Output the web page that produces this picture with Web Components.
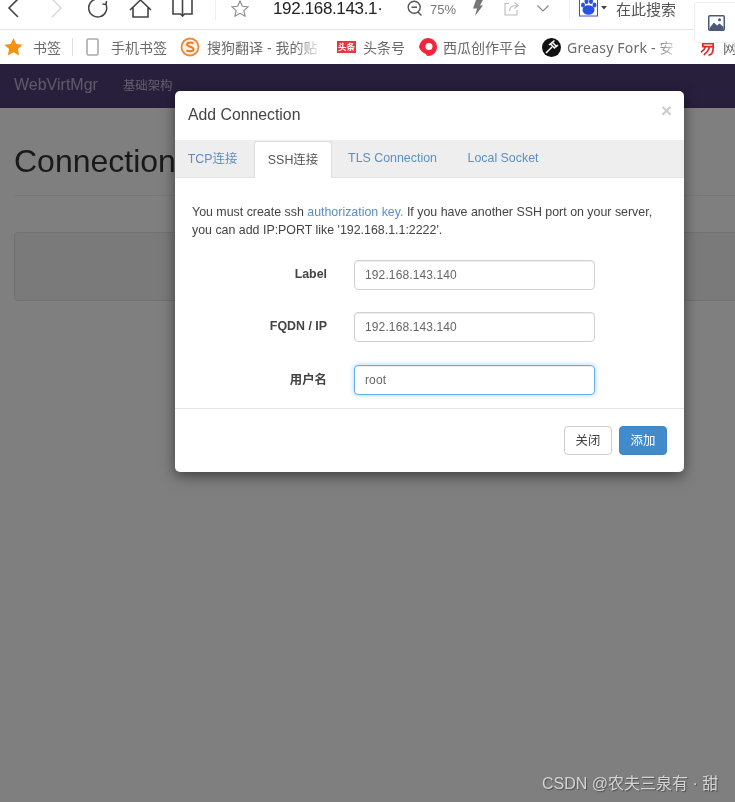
<!DOCTYPE html>
<html lang="zh">
<head>
<meta charset="utf-8">
<title>WebVirtMgr</title>
<style>
    html, body { margin: 0; height: 100%; overflow: hidden; background: #fff; }
    body {
        display: flex;
        flex-direction: column;
        width: 735px;
        height: 802px;
        font-family: "Liberation Sans", "Noto Sans CJK SC", sans-serif;
        position: relative;
        filter: blur(.35px);
    }
</style>
</head>
<body>
<browser-toolbar></browser-toolbar>
<bookmark-bar></bookmark-bar>
<web-page>
    <connection-modal></connection-modal>
</web-page>
<csdn-mark>CSDN @农夫三泉有 · 甜</csdn-mark>

<script>
const stroke = (d, w = 1.6, c = '#444') => `<path d="${d}" fill="none" stroke="${c}" stroke-width="${w}"/>`;

window.customElements.define('browser-toolbar', class BrowserToolbar extends HTMLElement {
    constructor() {
        super();
        this.attachShadow({ mode: 'open' });
        this.shadowRoot.innerHTML = `
            <style>
                :host {
                    display: flex;
                    align-items: center;
                    height: 29px;
                    border-bottom: 1px solid #e3e3e3;
                    background: #fff;
                    color: #222;
                    position: relative;
                    flex: none;
                }
                .cell { flex: none; display: flex; justify-content: center; align-items: center; height: 20px; margin-top: -13px; }
                svg { display: block; overflow: visible; }
                .sep { flex: none; width: 1px; height: 20px; margin-top: -9px; background: #eee; }
                .url { flex: none; font-size: 17px; width: 126px; margin: -11px 0 0 9px; white-space: nowrap; letter-spacing: -.35px; }
                .pct { flex: none; font-size: 13px; color: #777; margin: -11px 0 0 -1px; width: 38px; }
                .search { flex: none; font-size: 15px; color: #555; margin: -13px 0 0 4px; white-space: nowrap; }
                .thumb {
                    position: absolute; left: 694px; top: 2px; width: 44px; height: 41px;
                    background: #fff; border: 1px solid #eee; border-radius: 3px;
                    display: flex; align-items: center; justify-content: center;
                    box-sizing: border-box; z-index: 2;
                }
            </style>
            <span class="cell" style="width:28px"><svg width="12" height="20" viewBox="0 0 12 20">${stroke('M10 1 1 10l9 9')}</svg></span>
            <span style="flex:none;width:7px"></span>
            <span class="cell" style="width:42px"><svg width="12" height="20" viewBox="0 0 12 20">${stroke('M2 1l9 9-9 9', 1.4, '#d5d5d5')}</svg></span>
            <span class="cell" style="width:42px"><svg width="20" height="20" viewBox="0 0 20 20">${stroke('M18 6.500A9 9 0 1 1 9 1M18.500 3 18 6.500l-3.500-.5', 1.5)}</svg></span>
            <span class="cell" style="width:42px"><svg width="23" height="20" viewBox="0 0 23 20">${stroke('M1 12 11.500 2 22 12M4 9.500V19H19V9.500')}</svg></span>
            <span class="cell" style="width:42px"><svg width="21" height="20" viewBox="0 0 21 20">${stroke('M10.500 0V18M1 -2V16h7.500l2 2 2-2H20V-2')}</svg></span>
            <span style="flex:none;width:12px"></span>
            <span class="sep"></span>
            <span class="cell" style="width:48px"><svg width="18" height="17" viewBox="0 0 18 17">${stroke('M9 1l2.400 5.200 5.600.6-4.200 3.800 1.200 5.600L9 13.300l-5 2.900 1.200-5.600L1 6.800l5.600-.6z', 1.1, '#888')}</svg></span>
            <span class="url">192.168.143.1·</span>
            <span class="cell" style="width:32px"><svg width="17" height="17" viewBox="0 0 17 17">${stroke('M4.500 7.200h5.500M14.500 15.500l-3.800-3.800', 1.4, '#555')}<circle cx="7.200" cy="7.200" r="6" fill="none" stroke="#555" stroke-width="1.400"/></svg></span>
            <span class="pct">75%</span>
            <span class="cell" style="width:18px"><svg width="11" height="16" viewBox="0 0 11 16"><path d="M4 0h7L8 5.500h3L3 16l2-7.500H1z" fill="#777"/></svg></span>
            <span class="cell" style="width:51px"><svg width="15" height="15" viewBox="0 0 15 15">${stroke('M5 2.500H1v11.500h12v-5M5.500 10c0-4 3-5.500 7-5.500M10.500 1.500l3.500 3-3.500 3', 1.1, '#bbb')}</svg></span>
            <span class="cell" style="width:12px"><svg width="12" height="7" viewBox="0 0 12 7">${stroke('M.5.500 6 6l5.500-5.500', 1.2, '#888')}</svg></span>
            <span style="flex:none;width:20px"></span>
            <span class="sep" style="background:#f3f1e6"></span>
            <span class="cell" style="width:37px;margin-left:5px"><svg width="29" height="18" viewBox="0 0 29 18">
                <rect x=".5" y="-1" width="18" height="18" fill="#fff" stroke="#2f55d4"/>
                <g fill="#2a52e0"><ellipse cx="9.500" cy="11" rx="6" ry="4.800"/><ellipse cx="4" cy="6" rx="2" ry="2.600"/><ellipse cx="7.500" cy="2.500" rx="2" ry="2.600"/><ellipse cx="12" cy="2.500" rx="2" ry="2.600"/><ellipse cx="15.500" cy="6" rx="2" ry="2.600"/></g>
                <path d="M22 7h6l-3 3.500z" fill="#444"/></svg></span>
            <span class="search">在此搜索</span>
            <span class="thumb"><svg width="17" height="16" viewBox="0 0 17 16">
                <rect x=".75" y=".75" width="15.500" height="14.500" rx="1" fill="#fff" stroke="#4a5a78" stroke-width="1.500"/>
                <path d="M1.500 13 6 7.500l3 3 2.500-2 4 3.500v3H1.500z" fill="#4a5a78"/><circle cx="11.500" cy="4.800" r="1.500" fill="#4a5a78"/></svg></span>
        `;
    }
});

window.customElements.define('bookmark-item', class BookmarkItem extends HTMLElement {
    constructor() {
        super();
        this.attachShadow({ mode: 'open' });
        this.shadowRoot.innerHTML = `
            <style>
                :host { display: flex; align-items: center; flex: none; white-space: nowrap; overflow: hidden; }
                :host([fade]) slot:not([name]) { display: block; -webkit-mask-image: linear-gradient(to right, #000 78%, transparent 100%); mask-image: linear-gradient(to right, #000 78%, transparent 100%); flex: 1; overflow: hidden; }
                slot[name] { display: flex; }
            </style>
            <slot name="icon"></slot><slot></slot>
        `;
    }
});

window.customElements.define('bookmark-bar', class BookmarkBar extends HTMLElement {
    constructor() {
        super();
        this.attachShadow({ mode: 'open' });
        this.shadowRoot.innerHTML = `
            <style>
                :host {
                    display: flex;
                    align-items: center;
                    height: 34px;
                    background: #fff;
                    font-size: 14px;
                    color: #6a6a6a;
                    padding-left: 4px;
                    overflow: hidden;
                    flex: none;
                }
                svg { display: block; flex: none; }
                .sep { flex: none; width: 1px; height: 18px; background: #ddd; margin: 0 13px 0 11px; }
                .g { font-family: "Noto Sans", "Noto Sans CJK SC", sans-serif; letter-spacing: .2px; }
                .toutiao {
                    flex: none; display: block; width: 19px; height: 12px; margin-right: 7px;
                    background: #e8343c; color: #fff; font-size: 8.500px; font-weight: 700;
                    line-height: 12px; text-align: center; overflow: hidden; letter-spacing: 0;
                }
            </style>
            <bookmark-item style="width:57px">
                <svg slot="icon" width="19" height="18" viewBox="0 0 19 18" style="margin-right:10px"><path d="M9.500 0l2.700 6 6.500.7-4.800 4.400 1.300 6.400-5.700-3.300-5.700 3.300 1.300-6.400L.3 6.700 6.800 6z" fill="#f5920f"/></svg>书签
            </bookmark-item>
            <span class="sep"></span>
            <bookmark-item style="width:94px">
                <svg slot="icon" width="13" height="18" viewBox="0 0 13 18" style="margin-right:12px"><rect x="1" y="1" width="11" height="16" rx="1.500" fill="none" stroke="#aaa" stroke-width="1.600"/></svg>手机书签
            </bookmark-item>
            <bookmark-item fade style="width:142px">
                <svg slot="icon" width="20" height="20" viewBox="0 0 20 20" style="margin-right:7px"><circle cx="10" cy="10" r="8.500" fill="#fdf3e8" stroke="#ec8a3c" stroke-width="1.800"/><path d="M13.500 6.500C11 5 7 5.500 7 7.500c0 2.500 6.500 2 6.500 4.800 0 2.300-4.500 2.500-7 1" fill="none" stroke="#ec7a22" stroke-width="2"/></svg>搜狗翻译 - 我的贴
            </bookmark-item>
            <bookmark-item style="width:68px;margin-left:15px">
                <span slot="icon" class="toutiao">头条</span>头条号
            </bookmark-item>
            <bookmark-item style="width:118px;margin-left:13px">
                <svg slot="icon" width="20" height="20" viewBox="0 0 20 20" style="margin-right:5px"><path d="M10 1c5 0 9 4 9 9s-4 9-9 9c-1 0-2-1-2-2-3-1-6-3.500-7-7 1-5 4-9 9-9z" fill="#f2263a"/><circle cx="11" cy="9.500" r="3.500" fill="#fff"/></svg>西瓜创作平台
            </bookmark-item>
            <bookmark-item fade class="g" style="width:139px;margin-left:6px">
                <svg slot="icon" width="19" height="19" viewBox="0 0 19 19" style="margin-right:6px"><circle cx="9.500" cy="9.500" r="9.500" fill="#111"/><path d="M4 15l6-6M8 5.500l5 5M10 4l5 5M7 7l5.500-4.500M12 10l4-3" stroke="#fff" stroke-width="1.500"/></svg>Greasy Fork - 安
            </bookmark-item>
            <bookmark-item style="width:40px;margin-left:19px">
                <svg slot="icon" width="16" height="17" viewBox="0 0 17 18" style="margin-right:7px"><path d="M3 2h11v6H3zM3 5h11M6 8c-1 3-3 5-5 6M10 9c-1 3-3 6-6 8M14 9c0 4-1 8-5 8" fill="none" stroke="#e5262b" stroke-width="1.800"/></svg>网
            </bookmark-item>
        `;
    }
});

window.customElements.define('web-page', class WebPage extends HTMLElement {
    constructor() {
        super();
        this.attachShadow({ mode: 'open' });
        this.shadowRoot.innerHTML = `
            <style>
                :host {
                    display: block;
                    flex: 1;
                    position: relative;
                    background: #fff;
                    overflow: hidden;
                    min-height: 0;
                }
                nav {
                    display: flex;
                    align-items: center;
                    height: 44px;
                    box-sizing: border-box;
                    padding: 0 0 2px 14px;
                    background: #503e7a;
                    color: #bdb5cf;
                }
                .brand { font-size: 16px; margin-right: 25px; }
                .link { font-size: 12.400px; color: #c4bdd6; }
                main { padding: 0 0 0 14px; }
                h1 {
                    font-size: 32px;
                    font-weight: 400;
                    color: #333;
                    margin: 35px 0 0;
                    line-height: 36px;
                    padding-bottom: 16px;
                    border-bottom: 1px solid #eee;
                }
                .well {
                    height: 69px;
                    box-sizing: border-box;
                    margin-top: 36px;
                    margin-right: -10px;
                    background: #f5f5f5;
                    border: 1px solid #e3e3e3;
                    border-radius: 4px;
                }
                .backdrop { position: absolute; inset: 0; background: rgba(0, 0, 0, .5); }
            </style>
            <nav><span class="brand">WebVirtMgr</span><span class="link">基础架构</span></nav>
            <main>
                <h1>Connections</h1>
                <div class="well"></div>
            </main>
            <div class="backdrop"></div>
            <slot></slot>
        `;
    }
});

window.customElements.define('form-row', class FormRow extends HTMLElement {
    static get observedAttributes() { return ['label', 'value']; }
    constructor() {
        super();
        this.attachShadow({ mode: 'open' });
        this.shadowRoot.innerHTML = `
            <style>
                :host {
                    display: grid;
                    grid-template-columns: 152px 241px;
                    column-gap: 27px;
                    align-items: center;
                    font-size: 12.400px;
                    color: #444;
                }
                label { text-align: right; font-weight: 700; margin-top: -2px; }
                .input {
                    height: 30px;
                    box-sizing: border-box;
                    border: 1px solid #d0d0d0;
                    border-radius: 4px;
                    padding: 0 10px;
                    line-height: 28px;
                    font-size: 12px;
                    color: #666;
                    background: #fff;
                    letter-spacing: .12px;
                    box-shadow: inset 0 1px 1px rgba(0, 0, 0, .075);
                }
                :host([focus]) .input {
                    border-color: #66afe9;
                    box-shadow: inset 0 1px 1px rgba(0, 0, 0, .075), 0 0 5px rgba(102, 175, 233, .6);
                }
            </style>
            <label></label><div class="input"></div>
        `;
    }
    attributeChangedCallback(name, old, val) {
        this.shadowRoot.querySelector(name === 'label' ? 'label' : '.input').textContent = val;
    }
});

window.customElements.define('ui-button', class UiButton extends HTMLElement {
    constructor() {
        super();
        this.attachShadow({ mode: 'open' });
        this.shadowRoot.innerHTML = `
            <style>
                :host {
                    display: flex;
                    align-items: center;
                    justify-content: center;
                    width: 48px;
                    height: 29px;
                    box-sizing: border-box;
                    padding-bottom: 2px;
                    border: 1px solid #ccc;
                    border-radius: 4px;
                    background: #fff;
                    color: #444;
                    font-size: 12.400px;
                }
                :host([primary]) { background: #428bca; border-color: #3f86c4; color: #fff; }
            </style>
            <slot></slot>
        `;
    }
});

window.customElements.define('connection-modal', class ConnectionModal extends HTMLElement {
    constructor() {
        super();
        this.attachShadow({ mode: 'open' });
        this.shadowRoot.innerHTML = `
            <style>
                :host {
                    display: block;
                    position: absolute;
                    left: 175px;
                    top: 27px;
                    width: 509px;
                    height: 381px;
                    background: #fff;
                    border-radius: 5px;
                    box-shadow: 0 4px 14px rgba(0, 0, 0, .5);
                    overflow: hidden;
                    color: #333;
                }
                header {
                    display: flex;
                    justify-content: space-between;
                    height: 49px;
                    padding: 14px 12px 0 13px;
                    box-sizing: border-box;
                }
                h4 { margin: 0; font-size: 15.800px; font-weight: 400; line-height: 20px; color: #444; }
                .close { font-size: 19px; font-weight: 700; color: #ccc; line-height: 14px; margin-top: -1px; }
                .tabs {
                    display: flex;
                    align-items: flex-end;
                    height: 37px;
                    background: #eee;
                    border-bottom: 1px solid #e3e3e3;
                    font-size: 12.400px;
                    color: #5b8fc4;
                }
                .tab { display: flex; align-items: center; justify-content: center; height: 36px; padding-bottom: 2px; box-sizing: border-box; flex: none; }
                .tab.active {
                    background: #fff;
                    color: #555;
                    border: 1px solid #ddd;
                    border-bottom: 0;
                    border-radius: 3px 3px 0 0;
                    height: 37px;
                    margin-bottom: -1px;
                }
                p {
                    margin: 26px 0 0 17px;
                    width: 465px;
                    font-size: 12.400px;
                    line-height: 17.500px;
                    color: #444;
                }
                a { color: #5b8fc4; text-decoration: none; }
                .rows { display: grid; row-gap: 22.300px; margin-top: 21px; }
                footer {
                    position: absolute;
                    left: 0; right: 0; top: 317px;
                    height: 64px;
                    box-sizing: border-box;
                    border-top: 1px solid #e5e5e5;
                    display: flex;
                    justify-content: flex-end;
                    gap: 7px;
                    padding: 17px 17px 0 0;
                }
            </style>
            <header><h4>Add Connection</h4><span class="close">×</span></header>
            <div class="tabs">
                <span class="tab" style="width:75px">TCP连接</span>
                <span class="tab active" style="width:78px;margin-left:4px">SSH连接</span>
                <span class="tab" style="width:121px">TLS Connection</span>
                <span class="tab" style="width:100px">Local Socket</span>
            </div>
            <p>You must create ssh <a>authorization key.</a> If you have another SSH port on your server, you can add IP:PORT like '192.168.1.1:2222'.</p>
            <div class="rows">
                <form-row label="Label" value="192.168.143.140"></form-row>
                <form-row label="FQDN / IP" value="192.168.143.140"></form-row>
                <form-row label="用户名" value="root" focus></form-row>
            </div>
            <footer><ui-button>关闭</ui-button><ui-button primary>添加</ui-button></footer>
        `;
    }
});

window.customElements.define('csdn-mark', class CsdnMark extends HTMLElement {
    constructor() {
        super();
        this.attachShadow({ mode: 'open' });
        this.shadowRoot.innerHTML = `
            <style>
                :host {
                    position: absolute;
                    left: 542px;
                    top: 774px;
                    font-size: 16px;
                    line-height: 20px;
                    white-space: nowrap;
                    color: #d4d4d4;
                    text-shadow: 1px 1px 1px rgba(60, 60, 60, .7);
                }
            </style>
            <slot></slot>
        `;
    }
});
</script>
</body>
</html>
